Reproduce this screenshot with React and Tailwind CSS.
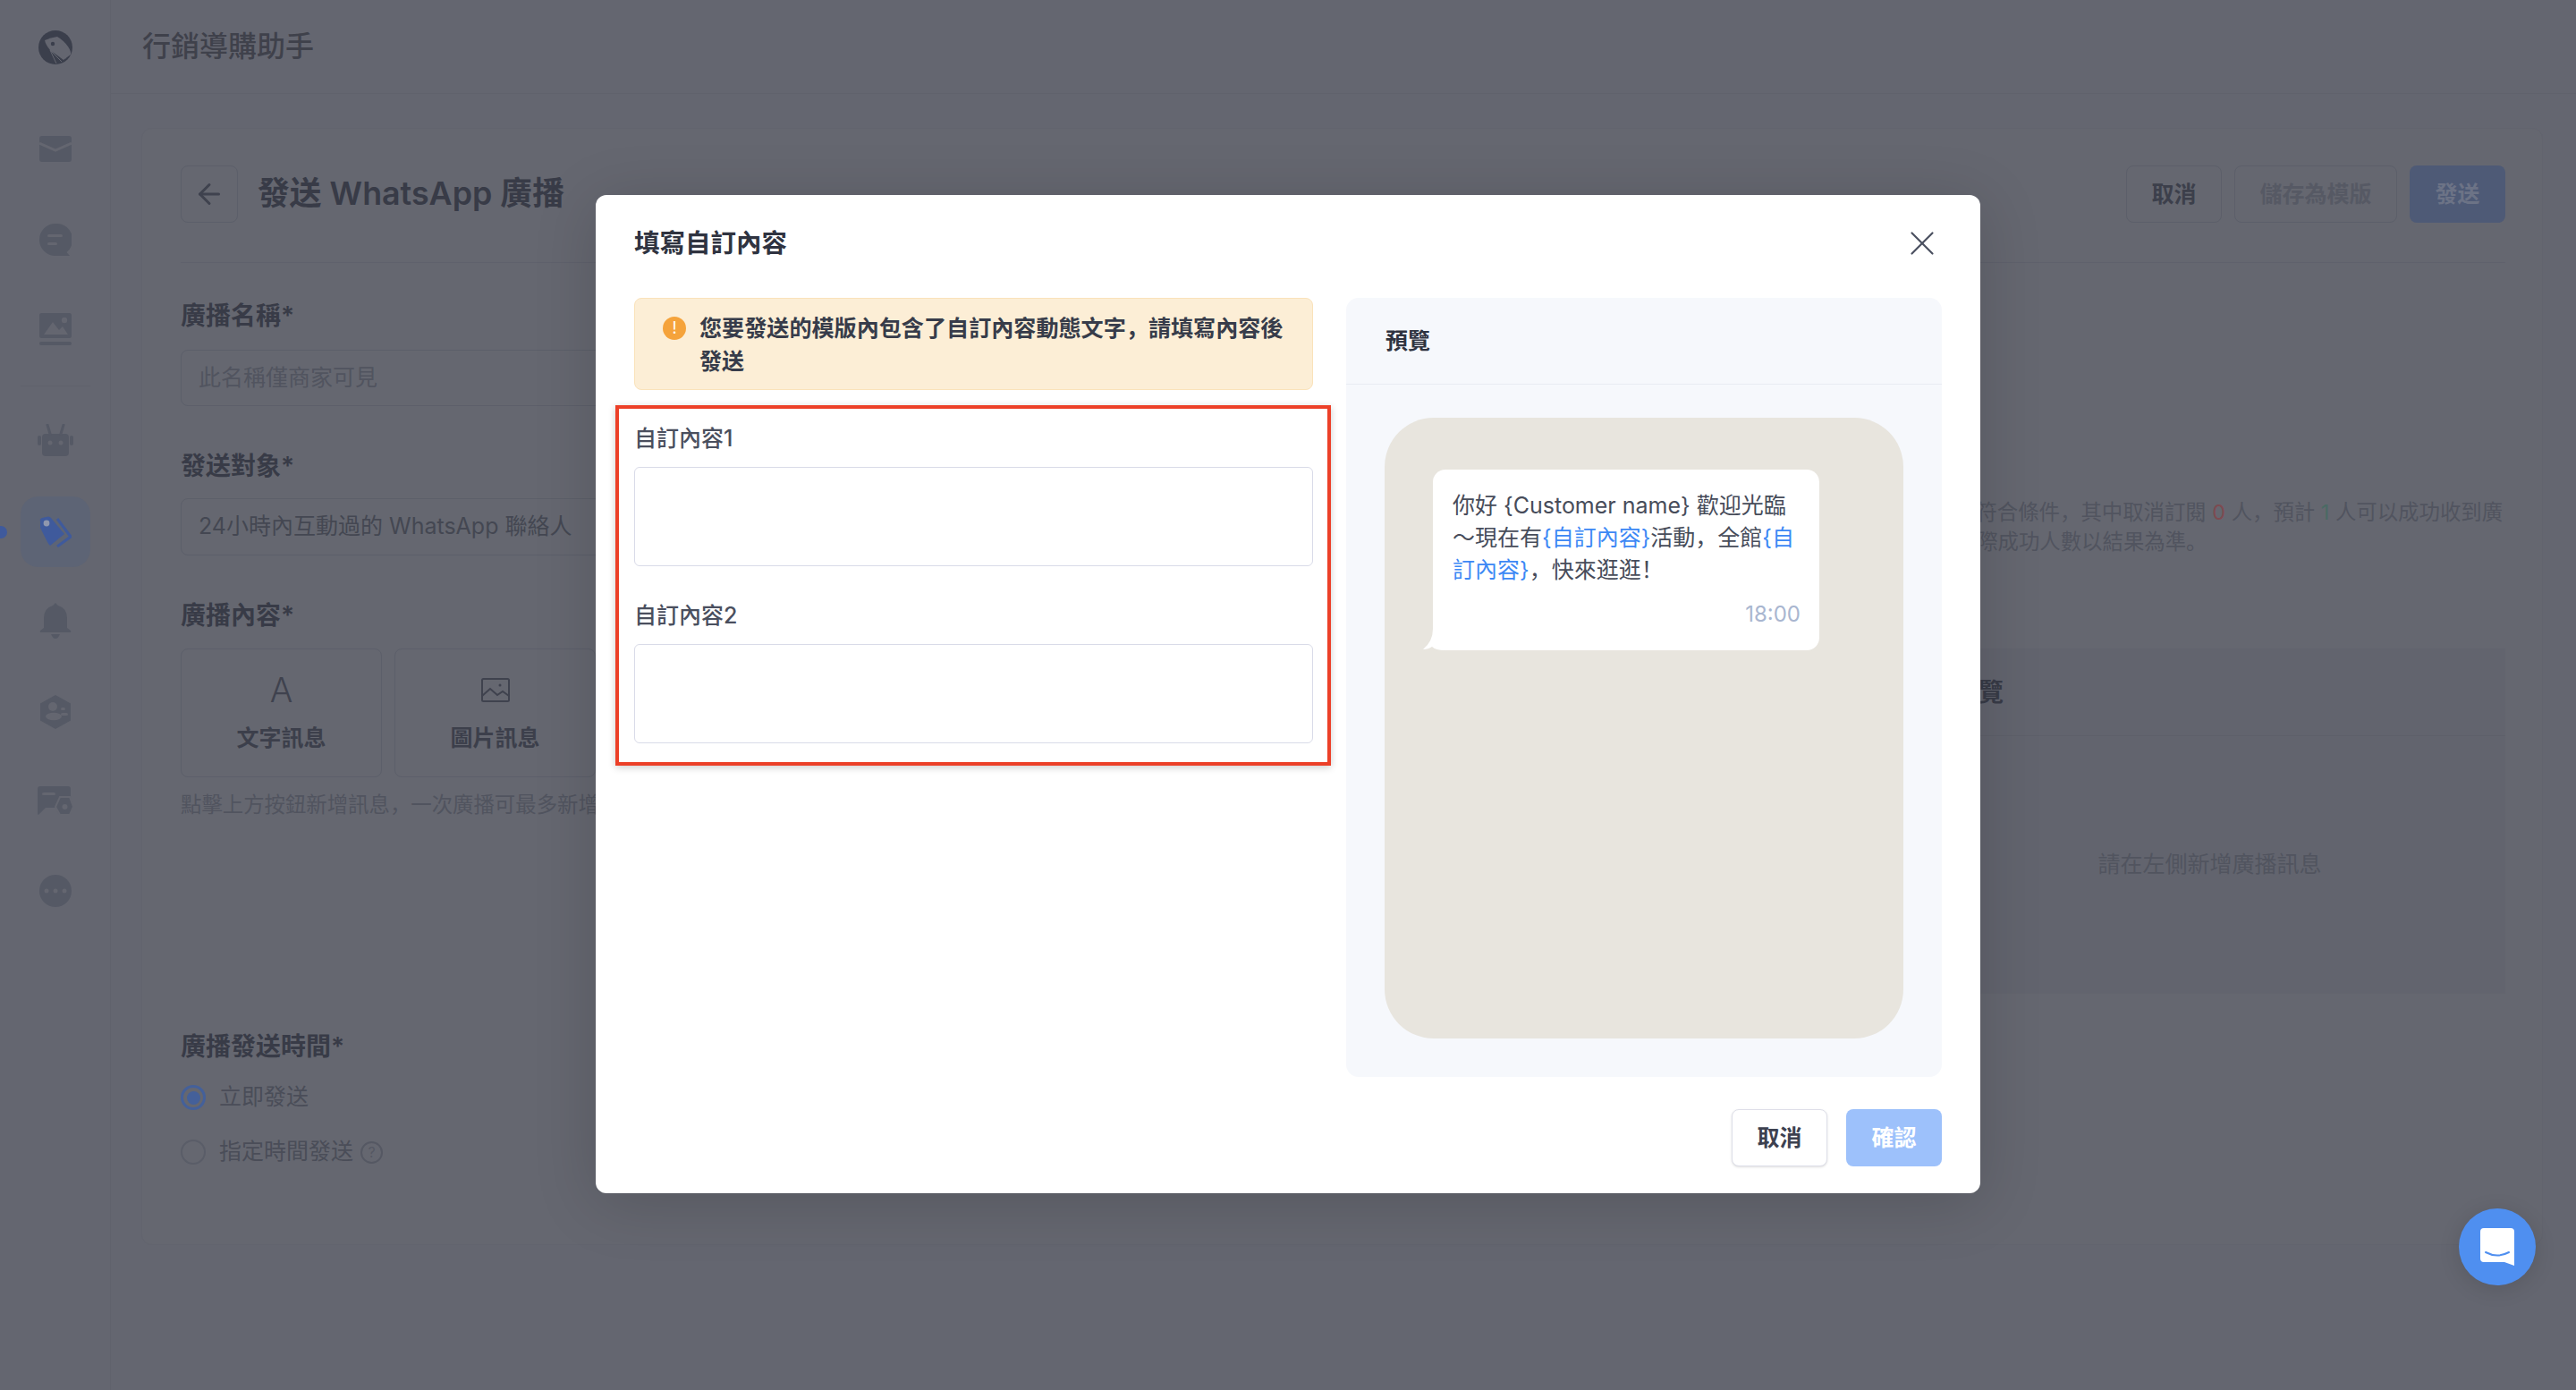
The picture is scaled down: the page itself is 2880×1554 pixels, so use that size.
import { ArrowLeft, X } from 'lucide-react';

// The page behind the modal is written in its already dimmed colours.
const Logo = () => (
    <svg width="38" height="38" viewBox="0 0 38 38">
        <circle cx="19" cy="19" r="19" fill="#3b3f4c" />
        <path d="M7 11 Q14 8 21 7 Q28 11 33 18 Q37 24 36 27 L28 33 L13 22 Q8 16 7 11Z" fill="#646670" />
        <circle cx="16" cy="15" r="2.2" fill="#3b3f4c" />
        <path d="M13 22 L20 37 M13 22 L26 35 M13 22 L31 31" stroke="#646670" strokeWidth="1" fill="none" />
    </svg>
);

const MailIcon = () => (
    <svg width="36" height="29" viewBox="0 0 36 29">
        <rect width="36" height="29" rx="3" fill="#555965" />
        <path d="M0 8 L18 16 L36 8" stroke="#646670" strokeWidth="3" fill="none" />
    </svg>
);

const ChatIcon = () => (
    <svg width="36" height="36" viewBox="0 0 36 36">
        <path d="M18 0a18 18 0 1 0 0 36h16l-3.5-4A18 18 0 0 0 18 0Z" fill="#555965" />
        <rect x="9" y="12" width="17" height="3" rx="1.5" fill="#646670" />
        <rect x="9" y="21" width="11" height="3" rx="1.5" fill="#646670" />
    </svg>
);

const GalleryIcon = () => (
    <svg width="36" height="36" viewBox="0 0 36 36">
        <rect width="36" height="28" rx="2.5" fill="#555965" />
        <path d="M5 24 L15 10 L22 19 L26 15 L32 24Z" fill="#646670" />
        <circle cx="28" cy="8" r="3.2" fill="#646670" />
        <rect y="32" width="36" height="4" rx="2" fill="#555965" />
    </svg>
);

const RobotIcon = () => (
    <svg width="40" height="36" viewBox="0 0 40 36">
        <rect x="5" y="11" width="30" height="25" rx="4" fill="#555965" />
        <rect y="13" width="4" height="11" rx="2" fill="#555965" />
        <rect x="36" y="13" width="4" height="11" rx="2" fill="#555965" />
        <path d="M11 1 L14 11 M29 1 L26 11" stroke="#555965" strokeWidth="3" strokeLinecap="round" />
        <circle cx="14" cy="21" r="2.5" fill="#646670" />
        <circle cx="26" cy="21" r="2.5" fill="#646670" />
    </svg>
);

const TagIcon = () => (
    <svg width="36" height="35" viewBox="0 0 36 35">
        <path d="M1 6 Q0 3 3 2 L10 0.5 Q12 0.5 13 2 L28 20 L12 33 Q10 31 9 29 L1 13Z" fill="#3f5a9c" />
        <path d="M20 3 L35 23 L20 34" stroke="#3f5a9c" strokeWidth="3" fill="none" />
        <circle cx="8" cy="8" r="3.4" fill="#8f97ae" />
    </svg>
);

const BellIcon = () => (
    <svg width="36" height="40" viewBox="0 0 36 40">
        <path d="M18 0 L21 3 Q31 6 31 17 L31 28 L35 31 Q36 33 34 33 L2 33 Q0 33 1 31 L5 28 L5 17 Q5 6 15 3Z" fill="#555965" />
        <path d="M13 35 H23 Q21 40 18 40 Q15 40 13 35Z" fill="#555965" />
    </svg>
);

const ContactsIcon = () => (
    <svg width="34" height="38" viewBox="0 0 34 38">
        <path d="M17 0 L34 9.5 L34 28.5 L17 38 L0 28.5 L0 9.5Z" fill="#555965" />
        <circle cx="14" cy="13" r="5" fill="#646670" />
        <ellipse cx="15" cy="24" rx="9" ry="4.2" fill="#646670" />
        <rect x="23" y="14" width="5" height="3" rx="1.5" fill="#646670" />
        <rect x="23" y="20" width="8" height="3" rx="1.5" fill="#646670" />
    </svg>
);

const MessageSettingsIcon = () => (
    <svg width="40" height="32" viewBox="0 0 40 32">
        <path d="M3 0 H34 Q37 0 37 3 V24 H9 L1 32 Q0 32 0 30 V3 Q0 0 3 0Z" fill="#555965" />
        <rect x="5" y="7" width="15" height="3" rx="1.5" fill="#646670" />
        <path d="M25 12 H36 L40 23 L36 32 H25 L20 23Z" fill="#555965" stroke="#646670" strokeWidth="2" />
        <circle cx="30.5" cy="23" r="3" fill="#646670" />
    </svg>
);

const MoreIcon = () => (
    <svg width="36" height="36" viewBox="0 0 36 36">
        <circle cx="18" cy="18" r="18" fill="#555965" />
        <circle cx="8" cy="18" r="2.5" fill="#646670" />
        <circle cx="18" cy="18" r="2.5" fill="#646670" />
        <circle cx="28" cy="18" r="2.5" fill="#646670" />
    </svg>
);

const PictureIcon = () => (
    <svg width="32" height="27" viewBox="0 0 32 27" fill="none" stroke="#3f424e" strokeWidth="2">
        <rect x="1" y="1" width="30" height="25" rx="1.5" />
        <path d="M1 20 L10 12 L18 19 L24 15 L31 20" />
        <circle cx="21" cy="8" r="1.5" fill="#3f424e" stroke="none" />
    </svg>
);

const WidgetIcon = () => (
    <svg width="38" height="42" viewBox="0 0 38 42">
        <path d="M4 0 H34 Q38 0 38 4 V42 L27 38 H4 Q0 38 0 34 V4 Q0 0 4 0Z" fill="#ffffff" />
        <path d="M6 27 Q19 34 32 27" stroke="#4f8ff0" strokeWidth="2" fill="none" strokeLinecap="round" />
    </svg>
);

const BubbleTail = () => (
    <svg className="absolute left-[-11px] bottom-0" width="24" height="24" viewBox="0 0 24 24">
        <path d="M11 0 Q11 14 0 23 Q6 23 10 20 Q14 24 24 24 L24 0Z" fill="#ffffff" />
    </svg>
);

const sideIcons = [
    { key: 'mail', icon: <MailIcon />, className: 'mt-[43px] h-[36px]' },
    { key: 'chat', icon: <ChatIcon />, className: 'mt-[66px] h-[36px]' },
    { key: 'gallery', icon: <GalleryIcon />, className: 'mt-[64px] h-[36px]' },
];

const PageBehind = () => (
    <div className="flex w-full h-full bg-[#646670]">
        {/* Sidebar */}
        <aside className="w-[124px] h-full shrink-0 border-r border-[#60626c] flex flex-col items-center">
            <div className="h-[105px] w-full flex items-center justify-center">
                <Logo />
            </div>
            {sideIcons.map((item) => (
                <div key={item.key} className={`flex items-center justify-center ${item.className}`}>
                    {item.icon}
                </div>
            ))}
            <div className="mt-[45px] w-[78px] h-px bg-[#60626c]" />
            <div className="mt-[42px] h-[36px] flex items-center"><RobotIcon /></div>
            <div className="relative mt-[45px] w-[78px] h-[79px] rounded-[20px] bg-[#5d6475] flex items-center justify-center">
                <TagIcon />
                <span className="absolute left-[-29px] top-[33px] w-[14px] h-[14px] rounded-full bg-[#3f5a9c]" />
            </div>
            <div className="mt-[40px] h-[40px] flex items-center"><BellIcon /></div>
            <div className="mt-[63px] h-[38px] flex items-center"><ContactsIcon /></div>
            <div className="mt-[64px] h-[32px] flex items-center"><MessageSettingsIcon /></div>
            <div className="mt-[67px] h-[36px] flex items-center"><MoreIcon /></div>
        </aside>

        <main className="flex-1 min-w-0 flex flex-col">
            <header className="h-[105px] shrink-0 border-b border-[#60626c] pl-[35px] flex items-center">
                <h1 className="text-[32px] font-medium text-[#3f414b]">行銷導購助手</h1>
            </header>

            <div className="pt-[38px] pl-[34px] pr-[37px]">
                <div className="w-[2685px] h-[1249px] rounded-[12px] bg-[#656770] border border-[#62646e] pl-[43px] pr-[41px] pt-[41px]">
                    {/* Toolbar */}
                    <div className="h-[64px] flex items-center">
                        <button className="w-[64px] h-[64px] rounded-[8px] border border-[#5c5f6a] flex items-center justify-center text-[#3f424e]">
                            <ArrowLeft size={36} strokeWidth={2} />
                        </button>
                        <h2 className="ml-[22px] text-[35.8px] font-semibold text-[#383b47]">發送 WhatsApp 廣播</h2>
                        <div className="ml-auto flex gap-[14px] text-[25px] font-semibold">
                            <button className="w-[107px] h-[64px] pt-[2px] rounded-[8px] border border-[#5c5f6a] text-[#3c3f4b]">取消</button>
                            <button className="w-[182px] h-[64px] pt-[2px] rounded-[8px] border border-[#5c5f6a] text-[#565964]">儲存為模版</button>
                            <button className="w-[107px] h-[64px] pt-[2px] rounded-[8px] bg-[#4e5a76] text-[#6c7386]">發送</button>
                        </div>
                    </div>
                    <div className="mt-[44px] h-px bg-[#5f616c]" />

                    <div className="flex">
                        {/* Form column */}
                        <div className="w-[1938px] pt-[39px]">
                            <p className="h-[40px] leading-[40px] text-[28px] font-semibold text-[#383b47]">廣播名稱*</p>
                            <div className="mt-[18px] h-[63px] w-[1800px] rounded-[8px] border border-[#5c5f6a] pl-[19px] flex items-center text-[25px] text-[#51545f]">此名稱僅商家可見</div>
                            <p className="mt-[47px] h-[40px] leading-[40px] text-[28px] font-semibold text-[#383b47]">發送對象*</p>
                            <div className="mt-[16px] h-[64px] w-[1800px] rounded-[8px] border border-[#5c5f6a] pl-[19px] flex items-center text-[25px] text-[#444752]">24小時內互動過的 WhatsApp 聯絡人</div>
                            <p className="mt-[47px] h-[40px] leading-[40px] text-[28px] font-semibold text-[#383b47]">廣播內容*</p>
                            <div className="mt-[17px] flex gap-[14px]">
                                <div className="w-[225px] h-[144px] rounded-[8px] border border-[#5c5f6a] flex flex-col items-center">
                                    <span className="mt-[20px] h-[50px] leading-[50px] text-[38px] font-light text-[#3f424e]">A</span>
                                    <span className="mt-[9px] text-[25px] leading-[40px] font-semibold text-[#3c3f4b]">文字訊息</span>
                                </div>
                                <div className="w-[225px] h-[144px] rounded-[8px] border border-[#5c5f6a] flex flex-col items-center">
                                    <span className="mt-[20px] h-[50px] flex items-center"><PictureIcon /></span>
                                    <span className="mt-[9px] text-[25px] leading-[40px] font-semibold text-[#3c3f4b]">圖片訊息</span>
                                </div>
                            </div>
                            <p className="mt-[11px] h-[40px] leading-[40px] text-[23.4px] text-[#51545f] whitespace-nowrap">點擊上方按鈕新增訊息，一次廣播可最多新增 5 則訊息</p>

                            <p className="mt-[230px] h-[40px] leading-[40px] text-[28px] font-semibold text-[#383b47]">廣播發送時間*</p>
                            <div className="mt-[17px] h-[40px] flex items-center">
                                <span className="w-[28px] h-[28px] rounded-full border-[3px] border-[#44609a] flex items-center justify-center">
                                    <span className="w-[15px] h-[15px] rounded-full bg-[#44609a]" />
                                </span>
                                <span className="ml-[15px] text-[25px] text-[#4a4d58]">立即發送</span>
                            </div>
                            <div className="mt-[21px] h-[40px] flex items-center">
                                <span className="w-[28px] h-[28px] rounded-full border-[2px] border-[#5a5d68]" />
                                <span className="ml-[15px] text-[25px] text-[#4a4d58]">指定時間發送</span>
                                <span className="ml-[8px] w-[25px] h-[25px] rounded-full border-[2px] border-[#555863] flex items-center justify-center text-[16px] text-[#555863]">?</span>
                            </div>
                        </div>

                        {/* Preview column */}
                        <div className="w-[661px] pt-[262px]">
                            <p className="text-[23.4px] leading-[33px] text-[#51545f] whitespace-nowrap">
                                共 1 人符合條件，其中取消訂閱 <span className="text-[#7d4a50]">0</span> 人，預計 <span className="text-[#4a6a64]">1</span> 人可以成功收到廣
                                <br />
                                播，實際成功人數以結果為準。
                            </p>
                            <div className="mt-[103px] h-[386px] bg-[#62646e] flex flex-col">
                                <div className="h-[98px] shrink-0 border-b border-[#5e606a] flex items-center pl-[44px] text-[28px] font-semibold text-[#383b47]">預覽</div>
                                <div className="flex-1 flex items-center justify-center text-[25px] text-[#51545f]">請在左側新增廣播訊息</div>
                            </div>
                        </div>
                    </div>
                </div>
            </div>
        </main>
    </div>
);

const CustomField = ({ label, className }) => (
    <div className={className}>
        <label className="block h-[40px] leading-[40px] text-[25px] font-medium text-[#4a4f5e]">{label}</label>
        <textarea className="mt-[12px] block w-full h-[111px] rounded-[6px] border border-[#d9dbe8] bg-white resize-none" />
    </div>
);

const CustomContentModal = () => (
    <div className="absolute left-[666px] top-[218px] w-[1548px] h-[1116px] rounded-[12px] bg-white px-[43px] shadow-[0_10px_70px_rgba(0,0,0,0.16)]">
        {/* Title */}
        <div className="h-[115px] pt-[31px] flex items-start justify-between">
            <h3 className="h-[46px] leading-[46px] text-[28.5px] font-bold text-[#2f3340]">填寫自訂內容</h3>
            <button className="w-[46px] h-[46px] -mr-[1px] flex items-center justify-center text-[#4b5060]">
                <X size={46} strokeWidth={1.15} />
            </button>
        </div>

        {/* Body */}
        <div className="h-[871px] flex gap-[37px]">
            <div className="relative w-[759px]">
                <div className="h-[103px] rounded-[8px] border border-[#fae2ba] bg-[#fceed6] pl-[31px] pr-[27px] pt-[15px] flex items-start gap-[15px]">
                    <span className="mt-[5px] w-[26px] h-[26px] shrink-0 rounded-full bg-[#f5a33b] flex items-center justify-center text-[18px] leading-none text-white">!</span>
                    <p className="text-[25.1px] leading-[37px] font-semibold text-[#373c4a]">
                        您要發送的模版內包含了自訂內容動態文字，請填寫內容後發送
                    </p>
                </div>
                <CustomField label="自訂內容1" className="mt-[34px]" />
                <CustomField label="自訂內容2" className="mt-[35px]" />
                {/* Highlight drawn on the screenshot */}
                <div className="absolute left-[-21px] top-[120px] w-[800px] h-[403px] border-[4px] border-[#ec4028] shadow-[0_2px_8px_rgba(0,0,0,0.2)] pointer-events-none" />
            </div>

            <div className="w-[666px] h-full rounded-[14px] bg-[#f6f8fc] overflow-hidden">
                <div className="h-[97px] pt-[2px] border-b border-[#e9ecf3] pl-[44px] flex items-center text-[25px] font-semibold text-[#2f3340]">預覽</div>
                <div className="mt-[37px] ml-[43px] w-[580px] h-[694px] rounded-[55px] bg-[#e8e5de] pl-[54px] pt-[58px]">
                    <div className="relative w-[432px] h-[202px] rounded-[14px] bg-white pl-[22px] pr-[21px] pt-[22px]">
                        <p className="text-[25px] leading-[36px] text-[#474c5a]">
                            你好 {'{Customer name}'} 歡迎光臨～現在有<span className="text-[#3c88f5]">{'{自訂內容}'}</span>活動，全館<span className="text-[#3c88f5]">{'{自訂內容}'}</span>，快來逛逛！
                        </p>
                        <p className="mt-[14px] text-right text-[24px] leading-[36px] text-[#a9b6d0]">18:00</p>
                        <BubbleTail />
                    </div>
                </div>
            </div>
        </div>

        {/* Footer */}
        <div className="mt-[36px] flex justify-end gap-[21px] text-[25px] font-semibold">
            <button className="w-[107px] h-[64px] pt-[2px] rounded-[8px] border border-[#dedfe9] bg-white text-[#3d4150] shadow-sm">取消</button>
            <button className="w-[107px] h-[64px] pt-[2px] rounded-[8px] bg-[#9dc1fb] text-white">確認</button>
        </div>
    </div>
);

export default function App() {
    return (
        <div lang="zh-CN" className="relative w-[2880px] h-[1554px] overflow-hidden font-[Inter,'Noto_Sans_CJK_SC',sans-serif]">
            <PageBehind />
            <CustomContentModal />
            <button className="absolute left-[2749px] top-[1351px] w-[86px] h-[86px] rounded-full bg-[#4f8ff0] flex items-center justify-center shadow-[0_4px_24px_rgba(0,0,0,0.12)]">
                <WidgetIcon />
            </button>
        </div>
    );
}
